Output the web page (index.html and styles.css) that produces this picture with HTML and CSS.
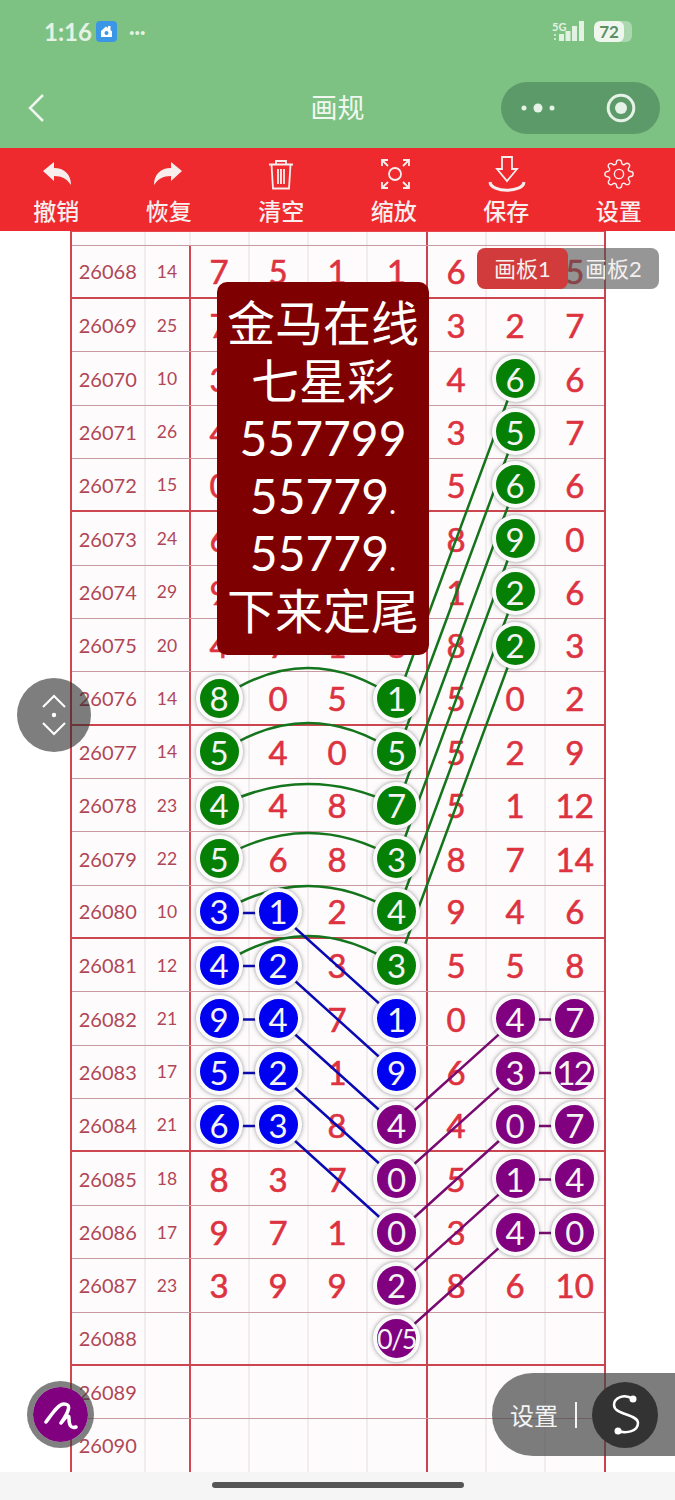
FILE: index.html
```html
<!DOCTYPE html>
<html lang="zh">
<head>
  <meta charset="UTF-8">
  <title>画规</title>
  <link rel="stylesheet" href="styles.css">
</head>
<body>
  <header class="head">
    <div class="status">
      <span class="time">1:16</span>
      <svg class="app-ico" width="21" height="21" viewBox="0 0 21 21"><rect width="21" height="21" rx="4" fill="#3c96e6"/><path d="M5 10l5-4.500 2 1.500V5h2.500v4l1.500 1.500V16H5z" fill="#fff"/><circle cx="10.500" cy="12" r="2" fill="#3c96e6"/></svg>
      <span class="more">···</span>
      <span class="grow"></span>
      <svg width="33" height="22" viewBox="0 0 33 22" class="signal"><text x="0" y="11" class="five-g">5G</text><circle cx="3" cy="15" r="1" fill="#e3f1e3"/><circle cx="3" cy="19" r="1" fill="#e3f1e3"/><rect x="7" y="14" width="5" height="7" fill="#e3f1e3"/><rect x="13.500" y="11" width="5" height="10" fill="#e3f1e3"/><rect x="20" y="6" width="5" height="15" fill="#e3f1e3"/><rect x="27" y="1" width="5" height="20" fill="#e3f1e3"/></svg>
      <span class="battery"><span class="battery-fill">72</span></span>
    </div>
    <div class="nav">
      <svg class="back" width="18" height="30" viewBox="0 0 18 30"><path d="M16 2L3 15l13 13" fill="none" stroke="#eef6ee" stroke-width="2.500"/></svg>
      <h1 class="title">画规</h1>
      <div class="capsule">
        <svg width="34" height="12" viewBox="0 0 34 12"><circle cx="3" cy="6" r="2.500" fill="#e6f2e6"/><circle cx="17" cy="6" r="4.500" fill="#e6f2e6"/><circle cx="31" cy="6" r="2.500" fill="#e6f2e6"/></svg>
        <svg width="30" height="30" viewBox="0 0 30 30"><circle cx="15" cy="15" r="12.800" fill="none" stroke="#e6f2e6" stroke-width="3"/><circle cx="15" cy="15" r="6" fill="#e6f2e6"/></svg>
      </div>
    </div>
  </header>

  <nav class="tools">
    <div class="tool">
      <svg class="tool-ico" viewBox="0 0 36 36"><path d="M5 15L16 6v6c10 0 17 6 17 17-4-6-9-9-17-9v5z" fill="#f8eeee"/></svg>
      <span>撤销</span>
    </div>
    <div class="tool">
      <svg class="tool-ico" viewBox="0 0 36 36"><path d="M31 15L20 6v6C10 12 3 18 3 29c4-6 9-9 17-9v5z" fill="#f8eeee"/></svg>
      <span>恢复</span>
    </div>
    <div class="tool">
      <svg class="tool-ico line" viewBox="0 0 36 36"><path d="M6 8.500h24M13 8.500V5h10v3.500M8.500 8.500l1.500 24h16l1.500-24M15 13v15M18 13v15M21 13v15"/></svg>
      <span>清空</span>
    </div>
    <div class="tool">
      <svg class="tool-ico line" viewBox="0 0 36 36"><circle cx="19" cy="18" r="6"/><path d="M6 10V4h6M6 4l6 6M33 10V4h-6M33 4l-6 6M6 26v6h6M6 32l6-6M33 26v6h-6M33 32l-6-6"/></svg>
      <span>缩放</span>
    </div>
    <div class="tool">
      <svg class="tool-ico line" viewBox="0 0 36 36"><path d="M14 1h10v12h5L19 25 9 13h5z"/><path class="tray" d="M2 26c1 11 33 11 34 0"/></svg>
      <span>保存</span>
    </div>
    <div class="tool">
      <svg class="tool-ico thin" viewBox="-2 -2 28 28"><circle cx="12" cy="12" r="3.600"/><path d="M19.400 15a1.650 1.650 0 0 0 .33 1.820l.06.06a2 2 0 0 1 0 2.830 2 2 0 0 1-2.830 0l-.06-.06a1.650 1.650 0 0 0-1.820-.33 1.650 1.650 0 0 0-1 1.510V21a2 2 0 0 1-2 2 2 2 0 0 1-2-2v-.09A1.650 1.650 0 0 0 9 19.400a1.650 1.650 0 0 0-1.820.33l-.06.06a2 2 0 0 1-2.830 0 2 2 0 0 1 0-2.830l.06-.06a1.650 1.650 0 0 0 .33-1.820 1.650 1.650 0 0 0-1.510-1H3a2 2 0 0 1-2-2 2 2 0 0 1 2-2h.09A1.650 1.650 0 0 0 4.600 9a1.650 1.650 0 0 0-.33-1.820l-.06-.06a2 2 0 0 1 0-2.830 2 2 0 0 1 2.830 0l.06.06a1.650 1.650 0 0 0 1.820.33H9a1.650 1.650 0 0 0 1-1.510V3a2 2 0 0 1 2-2 2 2 0 0 1 2 2v.09a1.650 1.650 0 0 0 1 1.510 1.650 1.650 0 0 0 1.820-.33l.06-.06a2 2 0 0 1 2.830 0 2 2 0 0 1 0 2.830l-.06.06a1.650 1.650 0 0 0-.33 1.820V9a1.650 1.650 0 0 0 1.510 1H21a2 2 0 0 1 2 2 2 2 0 0 1-2 2h-.09a1.650 1.650 0 0 0-1.510 1z"/></svg>
      <span>设置</span>
    </div>
  </nav>

  <main class="board">
    <div class="sheet">
      <div class="row stub"><i></i><i></i><i></i><i></i><i></i><i></i><i></i><i></i><i></i></div>
      <div class="row sec"><b class="no">26068</b><b class="sum">14</b><i>7</i><i>5</i><i>1</i><i>1</i><i>6</i><i></i><i>5</i></div>
      <div class="row"><b class="no">26069</b><b class="sum">25</b><i>7</i><i></i><i></i><i></i><i>3</i><i>2</i><i>7</i></div>
      <div class="row"><b class="no">26070</b><b class="sum">10</b><i>3</i><i></i><i></i><i></i><i>4</i><i><em class="ball g">6</em></i><i>6</i></div>
      <div class="row"><b class="no">26071</b><b class="sum">26</b><i>4</i><i></i><i></i><i></i><i>3</i><i><em class="ball g">5</em></i><i>7</i></div>
      <div class="row sec"><b class="no">26072</b><b class="sum">15</b><i>0</i><i></i><i></i><i></i><i>5</i><i><em class="ball g">6</em></i><i>6</i></div>
      <div class="row"><b class="no">26073</b><b class="sum">24</b><i>6</i><i></i><i></i><i></i><i>8</i><i><em class="ball g">9</em></i><i>0</i></div>
      <div class="row"><b class="no">26074</b><b class="sum">29</b><i>9</i><i></i><i></i><i></i><i>1</i><i><em class="ball g">2</em></i><i>6</i></div>
      <div class="row"><b class="no">26075</b><b class="sum">20</b><i>4</i><i>7</i><i>1</i><i>8</i><i>8</i><i><em class="ball g">2</em></i><i>3</i></div>
      <div class="row sec"><b class="no">26076</b><b class="sum">14</b><i><em class="ball g">8</em></i><i>0</i><i>5</i><i><em class="ball g">1</em></i><i>5</i><i>0</i><i>2</i></div>
      <div class="row"><b class="no">26077</b><b class="sum">14</b><i><em class="ball g">5</em></i><i>4</i><i>0</i><i><em class="ball g">5</em></i><i>5</i><i>2</i><i>9</i></div>
      <div class="row"><b class="no">26078</b><b class="sum">23</b><i><em class="ball g">4</em></i><i>4</i><i>8</i><i><em class="ball g">7</em></i><i>5</i><i>1</i><i>12</i></div>
      <div class="row"><b class="no">26079</b><b class="sum">22</b><i><em class="ball g">5</em></i><i>6</i><i>8</i><i><em class="ball g">3</em></i><i>8</i><i>7</i><i>14</i></div>
      <div class="row sec"><b class="no">26080</b><b class="sum">10</b><i><em class="ball b">3</em></i><i><em class="ball b">1</em></i><i>2</i><i><em class="ball g">4</em></i><i>9</i><i>4</i><i>6</i></div>
      <div class="row"><b class="no">26081</b><b class="sum">12</b><i><em class="ball b">4</em></i><i><em class="ball b">2</em></i><i>3</i><i><em class="ball g">3</em></i><i>5</i><i>5</i><i>8</i></div>
      <div class="row"><b class="no">26082</b><b class="sum">21</b><i><em class="ball b">9</em></i><i><em class="ball b">4</em></i><i>7</i><i><em class="ball b">1</em></i><i>0</i><i><em class="ball p">4</em></i><i><em class="ball p">7</em></i></div>
      <div class="row"><b class="no">26083</b><b class="sum">17</b><i><em class="ball b">5</em></i><i><em class="ball b">2</em></i><i>1</i><i><em class="ball b">9</em></i><i>6</i><i><em class="ball p">3</em></i><i><em class="ball p two">12</em></i></div>
      <div class="row sec"><b class="no">26084</b><b class="sum">21</b><i><em class="ball b">6</em></i><i><em class="ball b">3</em></i><i>8</i><i><em class="ball p">4</em></i><i>4</i><i><em class="ball p">0</em></i><i><em class="ball p">7</em></i></div>
      <div class="row"><b class="no">26085</b><b class="sum">18</b><i>8</i><i>3</i><i>7</i><i><em class="ball p">0</em></i><i>5</i><i><em class="ball p">1</em></i><i><em class="ball p">4</em></i></div>
      <div class="row"><b class="no">26086</b><b class="sum">17</b><i>9</i><i>7</i><i>1</i><i><em class="ball p">0</em></i><i>3</i><i><em class="ball p">4</em></i><i><em class="ball p">0</em></i></div>
      <div class="row"><b class="no">26087</b><b class="sum">23</b><i>3</i><i>9</i><i>9</i><i><em class="ball p">2</em></i><i>8</i><i>6</i><i>10</i></div>
      <div class="row sec"><b class="no">26088</b><b class="sum"></b><i></i><i></i><i></i><i><em class="ball p three">0/5</em></i><i></i><i></i><i></i></div>
      <div class="row"><b class="no">26089</b><b class="sum"></b><i></i><i></i><i></i><i></i><i></i><i></i><i></i></div>
      <div class="row"><b class="no">26090</b><b class="sum"></b><i></i><i></i><i></i><i></i><i></i><i></i><i></i></div>
    </div>

    <!-- lines between the balls, coordinates are page px less 1 -->
    <svg class="links" width="675" height="1241" viewBox="0 230 675 1241">
      <g class="green">
        <path d="M397 698L515.500 378M397 752L515.500 432M397 805L515.500 485M397 858L515.500 538M397 912L515.500 592M397 965L515.500 645"/>
        <path d="M219.500 698Q308 636 397 698M219.500 752Q308 692 397 752M219.500 805Q308 761 397 805M219.500 858Q308 806 397 858M219.500 912Q308 858 397 912M219.500 965Q308 905 397 965"/>
      </g>
      <g class="blue">
        <path d="M278.500 912L397 1018.500M278.500 965L397 1072M278.500 1018.500L397 1125M278.500 1072L397 1178.500M278.500 1125L397 1232"/>
        <path d="M219.500 912h59M219.500 965h59M219.500 1018.500h59M219.500 1072h59M219.500 1125h59"/>
      </g>
      <g class="purple">
        <path d="M397 1125L515.500 1018.500M397 1178.500L515.500 1072M397 1232L515.500 1125M397 1285L515.500 1178.500M397 1338.500L515.500 1232"/>
        <path d="M515.500 1018.500h59M515.500 1072h59M515.500 1125h59M515.500 1178.500h59M515.500 1232h59"/>
      </g>
    </svg>

    <div class="notice">金马在线<br>七星彩<br>557799<br>55779<span class="dot">.</span><br>55779<span class="dot">.</span><br>下来定尾</div>

    <div class="tabs">
      <span class="tab off">画板2</span>
      <span class="tab on">画板1</span>
    </div>

    <div class="scroll-btn">
      <svg width="32" height="46" viewBox="0 0 32 46"><path d="M5 15L16 4l11 11M5 31l11 11 11-11" fill="none" stroke="#fff" stroke-width="2"/><circle cx="16" cy="23" r="2.200" fill="#fff"/></svg>
    </div>

    <div class="pen-btn">
      <svg width="34" height="30" viewBox="0 0 34 30"><path d="M2 22C8 14 14 4 20 4c7 0 6 6-3 19 1-1 8-11 8-5 0 6 1 11 7 9" fill="none" stroke="#fff" stroke-width="3.500" stroke-linecap="round" stroke-linejoin="round"/></svg>
    </div>

    <div class="float-bar">
      <span class="float-label">设置</span>
      <span class="float-sep"></span>
      <span class="float-logo">
        <svg width="36" height="50" viewBox="0 0 36 50"><path d="M26 9C17 3 7 8 7 15c0 10 24 9 24 18 0 8-11 11-20 8" fill="none" stroke="#fff" stroke-width="2.500"/><circle cx="26" cy="9" r="3.500" fill="#fff"/><circle cx="11" cy="41" r="3.500" fill="#fff"/></svg>
      </span>
    </div>
  </main>

  <footer class="foot"><span class="home-bar"></span></footer>
</body>
</html>
```

FILE: styles.css
```css
* { box-sizing: border-box; }

html, body { margin: 0; height: 1500px; overflow: hidden; }

body {
  width: 675px;
  background: #fff;
  font-family: Lato, "Noto Sans CJK SC", sans-serif;
}

/* top green part */
.head { height: 148px; background: #7dc283; color: #eef6ee; }

.status {
  display: flex;
  align-items: center;
  height: 62px;
  padding: 0 43px 0 44px;
}
.time { font-size: 24px; font-weight: 700; color: #e5f2e5; width: 52px; }
.app-ico { display: block; }
.more { font-size: 20px; font-weight: 700; margin-left: 12px; color: #e5f2e5; }
.grow { flex: 1; }
.signal { display: block; overflow: visible; }
.five-g { font-size: 11px; font-weight: 700; fill: #e3f1e3; }
.battery {
  width: 38px;
  height: 21px;
  margin-left: 9px;
  background: rgba(255,255,255,.35);
  border-radius: 6px;
  overflow: hidden;
}
.battery-fill {
  display: block;
  width: 30px;
  height: 21px;
  background: #eef6ee;
  border-radius: 6px;
  color: #5b8f63;
  font-size: 17px;
  font-weight: 700;
  line-height: 21px;
  text-align: center;
}

.nav {
  position: relative;
  display: flex;
  align-items: center;
  justify-content: space-between;
  height: 86px;
  padding: 6px 15px 0 27px;
}
.back { display: block; }
.title {
  position: absolute;
  left: 0;
  right: 0;
  top: 28px;
  margin: 0;
  font-size: 27px;
  font-weight: 400;
  line-height: 36px;
  text-align: center;
  color: #f0f7f0;
}
.capsule {
  display: flex;
  align-items: center;
  justify-content: space-between;
  width: 159px;
  height: 52px;
  padding: 0 24px 0 20px;
  background: #5c9b69;
  border-radius: 26px;
}

/* red tool bar */
.tools {
  display: flex;
  height: 83px;
  padding-top: 8px;
  background: #ee2a2e;
}
.tool {
  flex: 1;
  display: flex;
  flex-direction: column;
  align-items: center;
  color: #f8eeee;
  font-size: 23px;
  font-weight: 500;
  line-height: 36px;
}
.tool-ico { display: block; width: 36px; height: 36px; margin-bottom: 1px; overflow: visible; }
.tool-ico.line { fill: none; stroke: #f8eeee; stroke-width: 1.800; }
.tool-ico.thin { fill: none; stroke: #f8eeee; stroke-width: 1.100; }
.tool-ico .tray { stroke-width: 3; }

/* the chart */
.board { position: relative; height: 1241px; background: #fff; overflow: hidden; }

.sheet {
  width: 536px;
  margin-left: 70px;
  border-left: 2.500px solid #d2464f;
  border-right: 2.500px solid #c9444e;
  border-top: 1px solid #e5484e;
}

.row {
  display: grid;
  grid-template-columns: 73.500px 45px 59px 59px 59px 60px 59px 59px 1fr;
  height: 53.350px;
  border-bottom: 1px solid #c99aa2;
  background: #fdfbfc;
}
.row.stub { height: 13.650px; }
.row.sec { border-bottom: 2.500px solid #cc4650; }
.row > * {
  display: flex;
  align-items: center;
  justify-content: center;
  font-style: normal;
  font-weight: 400;
  border-right: 2px solid #f1ecee;
}
.no { font-size: 20px; color: #b04656; }
.sum { font-size: 17.500px; color: #b04656; border-right: 2.500px solid #d2464f !important; }
.row > i { font-size: 33px; color: #dd3340; -webkit-text-stroke: .6px #dd3340; }
.row > i:nth-child(6) { border-right: 2.500px solid #c9444e; }
.row > i:last-child { border-right: 0; }

.ball {
  position: relative;
  z-index: 2;
  display: flex;
  align-items: center;
  justify-content: center;
  flex: none;
  width: 47px;
  height: 47px;
  border: 4px solid #fbfbfb;
  border-radius: 50%;
  box-shadow: 0 0 4px rgba(60,60,60,.55);
  color: #f4f4f4;
  font-style: normal;
  -webkit-text-stroke: 0;
  white-space: nowrap;
}
.ball.g { background: #058005; }
.ball.b { background: #0000f0; }
.ball.p { background: #800080; }
.ball.two { letter-spacing: -2px; padding-right: 2px; }
.ball.three { font-size: 27px; letter-spacing: -1.500px; }

.links { position: absolute; left: 0; top: 0; z-index: 1; pointer-events: none; }
.links g { fill: none; stroke-width: 2.500; }
.links .green { stroke: #14751c; }
.links .blue { stroke: #0a0ab4; }
.links .purple { stroke: #780a70; }

/* things lying over the chart */
.notice {
  position: absolute;
  left: 217px;
  top: 51px;
  z-index: 3;
  width: 212px;
  height: 373px;
  padding-top: 12px;
  background: #7f0000;
  border-radius: 10px;
  color: #fff;
  font-size: 48px;
  line-height: 57.600px;
  text-align: center;
}
.dot { font-size: 30px; line-height: 0; }

.tabs { position: absolute; left: 477px; top: 17px; z-index: 3; width: 182px; height: 41px; }
.tab {
  position: absolute;
  top: 0;
  height: 41px;
  border-radius: 8px;
  color: #f4f0f0;
  font-size: 22px;
  line-height: 41px;
  text-align: center;
}
.tab.on { left: 0; width: 91px; background: #d23b3b; }
.tab.off {
  right: 0;
  width: 120px;
  padding-left: 29px;
  background: rgba(80,80,80,.6);
}

.scroll-btn {
  position: absolute;
  left: 17px;
  top: 447px;
  z-index: 3;
  display: flex;
  align-items: center;
  justify-content: center;
  width: 74px;
  height: 74px;
  background: rgba(40,40,40,.6);
  border-radius: 50%;
}

.pen-btn {
  position: absolute;
  left: 27px;
  top: 1150px;
  z-index: 3;
  display: flex;
  align-items: center;
  justify-content: center;
  width: 67px;
  height: 67px;
  background: #800080;
  background-clip: padding-box;
  border: 6px solid rgba(60,60,60,.65);
  border-radius: 50%;
}

.float-bar {
  position: absolute;
  left: 492px;
  top: 1142px;
  z-index: 3;
  display: flex;
  align-items: center;
  width: 183px;
  height: 83px;
  padding-left: 18px;
  background: rgba(70,70,70,.7);
  border-radius: 41px 0 0 41px;
  color: #f4f4f4;
}
.float-label { font-size: 24px; width: 65px; }
.float-sep { width: 2px; height: 26px; background: #f4f4f4; }
.float-logo {
  display: flex;
  align-items: center;
  justify-content: center;
  width: 66px;
  height: 66px;
  margin-left: 15px;
  background: #333;
  border-radius: 50%;
}

.foot { height: 28px; background: #f5f5f5; padding-top: 10px; }
.home-bar {
  display: block;
  width: 252px;
  height: 6px;
  margin: 0 auto;
  background: #555;
  border-radius: 3px;
}
```
